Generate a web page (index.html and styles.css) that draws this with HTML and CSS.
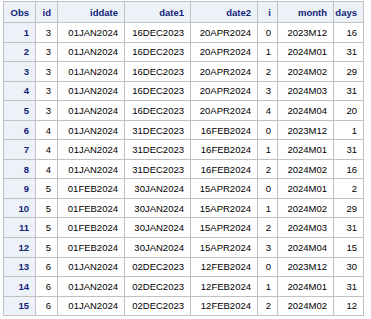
FILE: index.html
```html
<!DOCTYPE html>
<html>
<head>
<meta charset="utf-8">
<link rel="stylesheet" href="styles.css">
</head>
<body>
<table class="tbl">
<colgroup>
<col class="c-obs"><col class="c-id"><col class="c-iddate"><col class="c-date1"><col class="c-date2"><col class="c-i"><col class="c-month"><col class="c-days">
</colgroup>
<thead>
<tr class="hrow"><th>Obs</th><th>id</th><th>iddate</th><th>date1</th><th>date2</th><th>i</th><th>month</th><th>days</th></tr>
</thead>
<tbody>
<tr><th>1</th><td>3</td><td>01JAN2024</td><td>16DEC2023</td><td>20APR2024</td><td>0</td><td>2023M12</td><td>16</td></tr>
<tr><th>2</th><td>3</td><td>01JAN2024</td><td>16DEC2023</td><td>20APR2024</td><td>1</td><td>2024M01</td><td>31</td></tr>
<tr><th>3</th><td>3</td><td>01JAN2024</td><td>16DEC2023</td><td>20APR2024</td><td>2</td><td>2024M02</td><td>29</td></tr>
<tr><th>4</th><td>3</td><td>01JAN2024</td><td>16DEC2023</td><td>20APR2024</td><td>3</td><td>2024M03</td><td>31</td></tr>
<tr><th>5</th><td>3</td><td>01JAN2024</td><td>16DEC2023</td><td>20APR2024</td><td>4</td><td>2024M04</td><td>20</td></tr>
<tr><th>6</th><td>4</td><td>01JAN2024</td><td>31DEC2023</td><td>16FEB2024</td><td>0</td><td>2023M12</td><td>1</td></tr>
<tr><th>7</th><td>4</td><td>01JAN2024</td><td>31DEC2023</td><td>16FEB2024</td><td>1</td><td>2024M01</td><td>31</td></tr>
<tr><th>8</th><td>4</td><td>01JAN2024</td><td>31DEC2023</td><td>16FEB2024</td><td>2</td><td>2024M02</td><td>16</td></tr>
<tr><th>9</th><td>5</td><td>01FEB2024</td><td>30JAN2024</td><td>15APR2024</td><td>0</td><td>2024M01</td><td>2</td></tr>
<tr><th>10</th><td>5</td><td>01FEB2024</td><td>30JAN2024</td><td>15APR2024</td><td>1</td><td>2024M02</td><td>29</td></tr>
<tr><th>11</th><td>5</td><td>01FEB2024</td><td>30JAN2024</td><td>15APR2024</td><td>2</td><td>2024M03</td><td>31</td></tr>
<tr><th>12</th><td>5</td><td>01FEB2024</td><td>30JAN2024</td><td>15APR2024</td><td>3</td><td>2024M04</td><td>15</td></tr>
<tr><th>13</th><td>6</td><td>01JAN2024</td><td>02DEC2023</td><td>12FEB2024</td><td>0</td><td>2023M12</td><td>30</td></tr>
<tr><th>14</th><td>6</td><td>01JAN2024</td><td>02DEC2023</td><td>12FEB2024</td><td>1</td><td>2024M01</td><td>31</td></tr>
<tr><th>15</th><td>6</td><td>01JAN2024</td><td>02DEC2023</td><td>12FEB2024</td><td>2</td><td>2024M02</td><td>12</td></tr>
</tbody>
</table>
</body>
</html>
```
FILE: styles.css
```css
html, body {
  margin: 0;
  background: #ffffff;
}
body {
  padding: 1px 0 0 3px;
  font-family: "Liberation Sans", Arial, sans-serif;
  font-size: 9.5px;
  color: #000000;
}
.tbl {
  border-collapse: collapse;
  table-layout: fixed;
  width: 361px;
}
.c-obs { width: 32px; }
.c-id { width: 22px; }
.c-iddate { width: 67px; }
.c-date1 { width: 66px; }
.c-date2 { width: 67px; }
.c-i { width: 20px; }
.c-month { width: 56px; }
.c-days { width: 30px; }
.tbl th, .tbl td {
  border: 1px solid #c1c1c1;
  padding: 0 6px 0 0;
  text-align: right;
  height: 18.55px;
  white-space: nowrap;
  overflow: hidden;
}
.tbl th {
  background: #edf2f9;
  color: #112277;
  font-weight: bold;
}
.tbl .hrow th {
  height: 20px;
}
```
